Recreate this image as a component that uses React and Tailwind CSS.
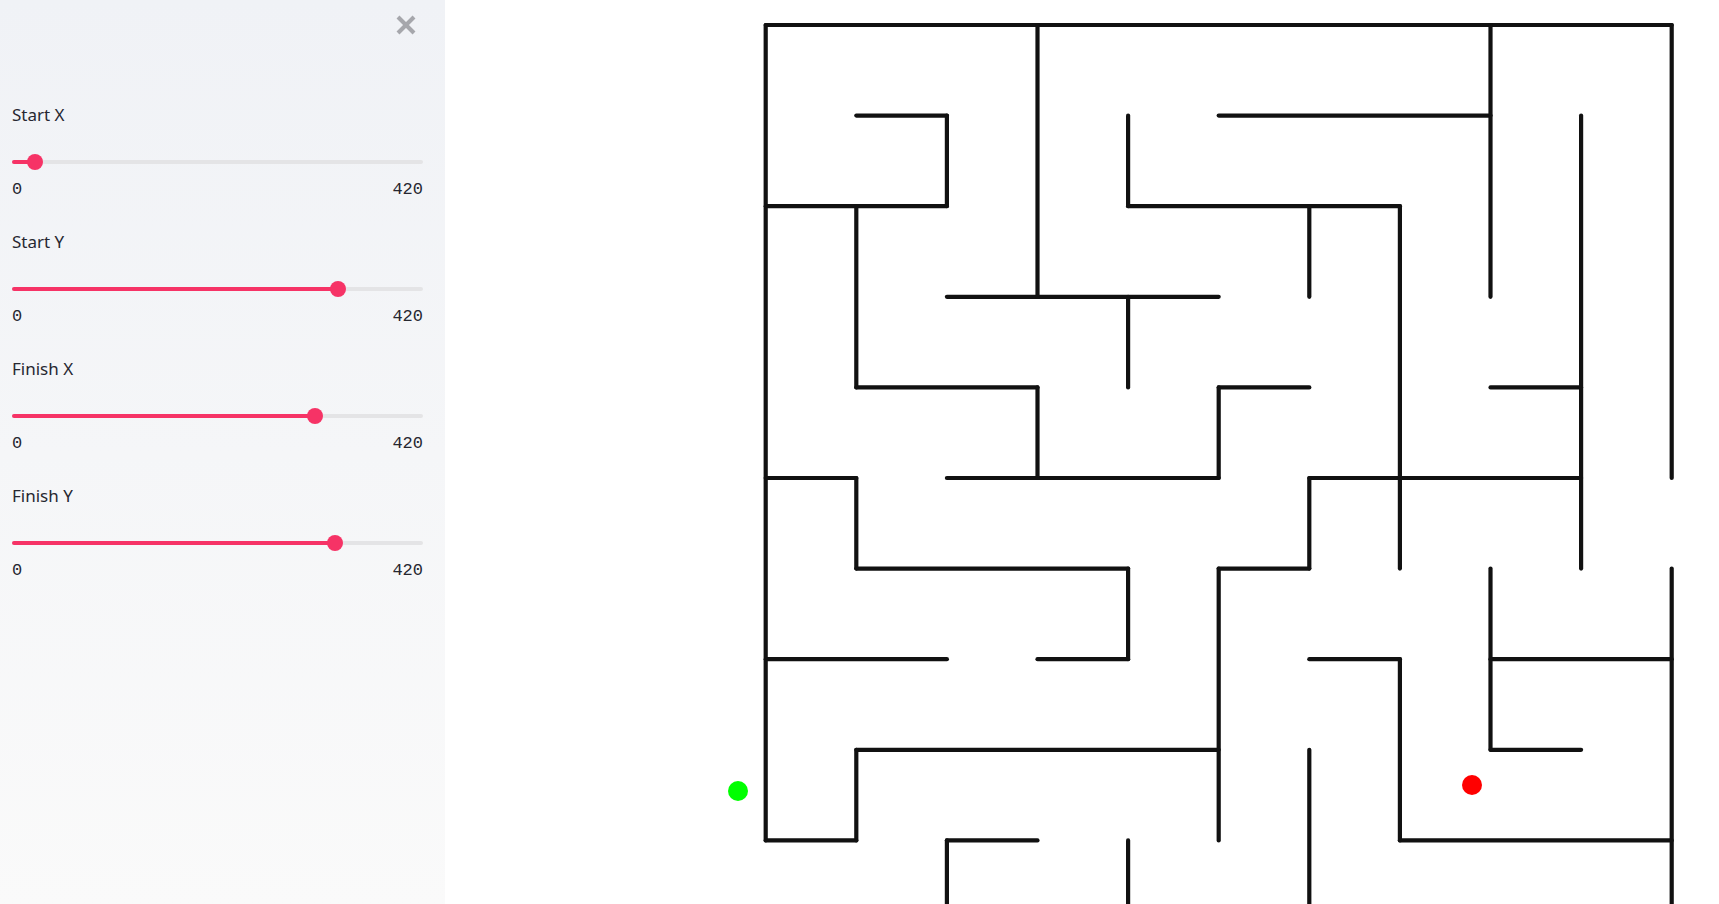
import React from "react";

const X0 = 765.7;
const Y0 = 25;
const C = 90.6;
const px = (i) => X0 + C * i;
const py = (j) => Y0 + C * j;

// horizontal walls: [row, fromCol, toCol]
const H = [
  [0, 0, 10],
  [1, 1, 2], [1, 5, 8],
  [2, 0, 2], [2, 4, 7],
  [3, 2, 5],
  [4, 1, 3], [4, 5, 6], [4, 8, 9],
  [5, 0, 1], [5, 2, 5], [5, 6, 9],
  [6, 1, 4], [6, 5, 6],
  [7, 0, 2], [7, 3, 4], [7, 6, 7], [7, 8, 10],
  [8, 1, 5], [8, 8, 9],
  [9, 0, 1], [9, 2, 3], [9, 7, 10],
];
// vertical walls: [col, fromRow, toRow]
const V = [
  [0, 0, 9],
  [1, 2, 4], [1, 5, 6], [1, 8, 9],
  [2, 1, 2], [2, 9, 10],
  [3, 0, 3], [3, 4, 5],
  [4, 1, 2], [4, 3, 4], [4, 6, 7], [4, 9, 10],
  [5, 4, 5], [5, 6, 9],
  [6, 2, 3], [6, 5, 6], [6, 8, 10],
  [7, 2, 6], [7, 7, 9],
  [8, 0, 3], [8, 6, 8],
  [9, 1, 6],
  [10, 0, 5], [10, 6, 10],
];

function Maze() {
  return (
    <svg width="1274" height="904" viewBox="445 0 1274 904" className="block">
      <g stroke="#111111" strokeWidth="4.2" strokeLinecap="round" strokeLinejoin="round" fill="none">
        {H.map(([r, a, b], k) => (
          <line key={"h" + k} x1={px(a)} y1={py(r)} x2={px(b)} y2={py(r)} />
        ))}
        {V.map(([c, a, b], k) => (
          <line key={"v" + k} x1={px(c)} y1={py(a)} x2={px(c)} y2={py(b)} />
        ))}
      </g>
      <circle cx="738" cy="791" r="10" fill="#00ff00" />
      <circle cx="1472" cy="785" r="10" fill="#ff0000" />
    </svg>
  );
}

function Slider({ label, frac }) {
  return (
    <div className="flex flex-col">
      <div
        className="h-6 text-[17px] leading-6 text-[#262730]"
        style={{ fontFamily: '"Noto Sans", sans-serif' }}
      >
        {label}
      </div>
      <div className="pt-[27px] pb-[8px]">
        <div className="relative h-4 flex items-center">
          <div className="h-[4px] w-full bg-[#e4e4e6] rounded-full" />
          <div
            className="absolute left-0 top-[6px] h-[4px] bg-[#f63366] rounded-full"
            style={{ width: `${frac * 100}%` }}
          />
          <div
            className="absolute top-0 h-4 w-4 -ml-2 rounded-full bg-[#f63366]"
            style={{ left: `${frac * 100}%` }}
          />
        </div>
      </div>
      <div
        className="h-6 leading-6 text-[17px] text-[#262730] flex justify-between"
        style={{ fontFamily: '"Liberation Mono", monospace' }}
      >
        <span>0</span>
        <span>420</span>
      </div>
    </div>
  );
}

export default function App() {
  return (
    <div className="flex h-[904px] w-[1719px] overflow-hidden bg-white">
      <aside className="w-[445px] shrink-0 h-full bg-gradient-to-b from-[#f0f2f6] to-[#fafafa] pt-[14px]">
        <div className="flex justify-end pr-[28px] h-[22px]">
          <svg width="22" height="22" viewBox="0 0 22 22">
            <g stroke="#a6a7ac" strokeWidth="4">
              <line x1="3" y1="3" x2="19" y2="19" />
              <line x1="19" y1="3" x2="3" y2="19" />
            </g>
          </svg>
        </div>
        <div className="mt-[66.5px] pl-[12px] pr-[22px] flex flex-col gap-[28.3px]">
          <Slider label="Start X" frac={0.0553} />
          <Slider label="Start Y" frac={0.792} />
          <Slider label="Finish X" frac={0.737} />
          <Slider label="Finish Y" frac={0.786} />
        </div>
      </aside>
      <main className="flex-1 h-full">
        <Maze />
      </main>
    </div>
  );
}
